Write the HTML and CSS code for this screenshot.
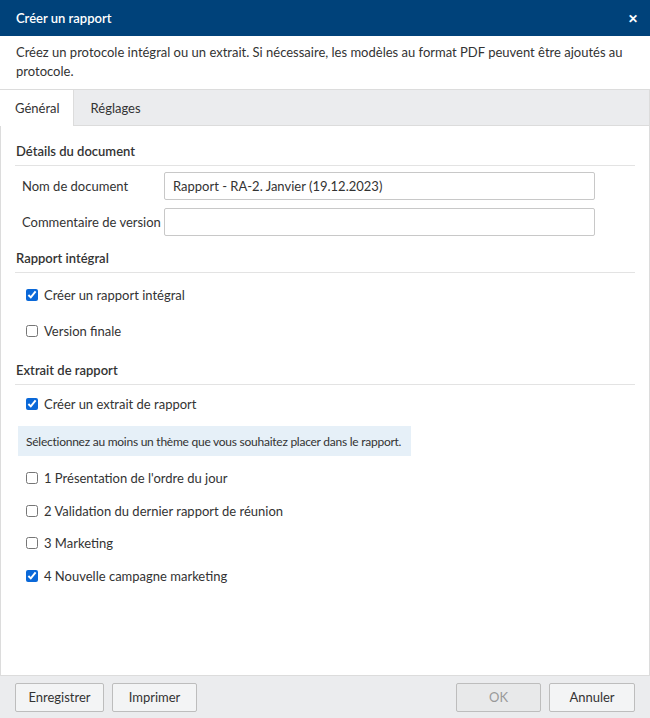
FILE: index.html
```html
<!DOCTYPE html>
<html lang="fr">
<head>
<meta charset="utf-8">
<link rel="stylesheet" href="styles.css">
</head>
<body>
<div class="dialog">
  <div class="header">
    <span class="title">Créer un rapport</span>
    <span class="close">✕</span>
  </div>
  <div class="desc">Créez un protocole intégral ou un extrait. Si nécessaire, les modèles au format PDF peuvent être ajoutés au protocole.</div>
  <div class="tabs">
    <div class="tab active">Général</div>
    <div class="tab">Réglages</div>
  </div>
  <div class="content">
    <div class="section s1">
      <div class="sec-title">Détails du document</div>
      <div class="field">
        <label class="flabel">Nom de document</label>
        <div class="input">Rapport - RA-2. Janvier (19.12.2023)</div>
      </div>
      <div class="field">
        <label class="flabel">Commentaire de version</label>
        <div class="input"></div>
      </div>
    </div>
    <div class="section s2">
      <div class="sec-title">Rapport intégral</div>
      <label class="check"><input type="checkbox" checked><span>Créer un rapport intégral</span></label>
      <label class="check"><input type="checkbox"><span>Version finale</span></label>
    </div>
    <div class="section">
      <div class="sec-title">Extrait de rapport</div>
      <label class="check first"><input type="checkbox" checked><span>Créer un extrait de rapport</span></label>
      <div class="info">Sélectionnez au moins un thème que vous souhaitez placer dans le rapport.</div>
      <label class="check item"><input type="checkbox"><span>1 Présentation de l'ordre du jour</span></label>
      <label class="check item"><input type="checkbox"><span>2 Validation du dernier rapport de réunion</span></label>
      <label class="check item"><input type="checkbox"><span>3 Marketing</span></label>
      <label class="check item"><input type="checkbox" checked><span>4 Nouvelle campagne marketing</span></label>
    </div>
  </div>
  <div class="footer">
    <div class="btn-group">
      <button class="btn btn-save">Enregistrer</button>
      <button class="btn btn-print">Imprimer</button>
    </div>
    <div class="btn-group">
      <button class="btn btn-ok" disabled>OK</button>
      <button class="btn btn-cancel">Annuler</button>
    </div>
  </div>
</div>
</body>
</html>
```

FILE: styles.css
```css
* { box-sizing: border-box; }
html, body { margin: 0; padding: 0; }
body {
  font-family: "Lato", "Open Sans", sans-serif;
  font-size: 13px;
  color: #333;
  background: #fff;
}
.dialog {
  width: 650px;
  height: 718px;
  display: flex;
  flex-direction: column;
}
.header {
  height: 36px;
  background: #00427a;
  color: #fff;
  display: flex;
  align-items: center;
  justify-content: space-between;
  padding: 0 12px 0 16px;
  flex-shrink: 0;
}
.title { font-size: 13px; font-weight: 600; }
.close { font-size: 12px; font-weight: 700; }
.desc {
  padding: 7px 16px 8px 16px;
  line-height: 19px;
  color: #333;
  height: 53px;
  flex-shrink: 0;
}
.tabs {
  display: flex;
  height: 37px;
  background: #ebecee;
  border: 1px solid #dcdcdc;
  flex-shrink: 0;
}
.tab {
  display: flex;
  align-items: center;
  color: #333;
}
.tab.active {
  background: #fff;
  border-right: 1px solid #dcdcdc;
  margin-bottom: -1px;
  margin-left: -1px;
  padding-left: 15px;
  padding-right: 13px;
}
.tab + .tab { padding-left: 17px; }
.content {
  flex: 1;
  border-left: 1px solid #dcdcdc;
  border-right: 1px solid #dcdcdc;
  padding: 17px 14px 0 14px;
}
.section { margin-bottom: 12px; }
.section.s1 { margin-bottom: 14px; }
.section.s2 { margin-bottom: 13px; }
.sec-title {
  font-weight: 600;
  color: #333;
  padding: 0 0 6px 1px;
  border-bottom: 1px solid #e3e3e3;
  margin-bottom: 6px;
}
.s2 .sec-title { margin-bottom: 4px; }
.field {
  display: flex;
  align-items: center;
  height: 28px;
  margin-bottom: 8px;
}
.flabel {
  width: 149px;
  padding-left: 7px;
  color: #333;
}
.input {
  width: 431px;
  height: 28px;
  border: 1px solid #c8c8c8;
  border-radius: 2px;
  padding: 0 8px;
  display: flex;
  align-items: center;
  color: #333;
}
.check {
  display: flex;
  align-items: center;
  height: 36px;
  padding-left: 11px;
}
.check input {
  margin: 0 6px 0 0;
  width: 12px;
  height: 12px;
  accent-color: #0a68d8;
}
.check.first { height: 22px; margin-top: 8px; }
.info {
  background: #e6f0f8;
  margin: 11px 0 6px 3px;
  width: 393px;
  height: 30px;
  padding: 0 8px;
  display: flex;
  align-items: center;
  font-size: 12px;
  letter-spacing: -0.25px;
  white-space: nowrap;
  color: #333;
}
.check.item { height: 32.5px; }
.footer {
  height: 43px;
  background: #ebecee;
  border-top: 1px solid #dcdcdc;
  display: flex;
  justify-content: space-between;
  align-items: center;
  padding: 0 15px;
  flex-shrink: 0;
}
.btn-group { display: flex; gap: 8px; }
.btn {
  font-family: inherit;
  font-size: 13px;
  height: 29px;
  border: 1px solid #bdbdbd;
  border-radius: 2px;
  background: #f3f4f5;
  color: #333;
  padding: 0;
}
.btn-save { width: 89px; }
.btn-print { width: 85px; }
.btn-ok { width: 85px; color: #999; background: #e8e9ea; }
.btn-cancel { width: 86px; }
```
